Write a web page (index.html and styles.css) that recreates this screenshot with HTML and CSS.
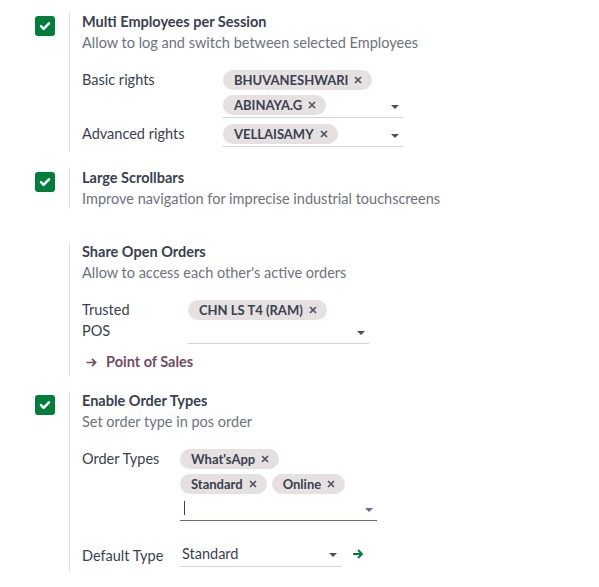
FILE: index.html
```html
<!DOCTYPE html>
<html lang="en">
  <head>
    <meta charset="UTF-8" />
    <title>POS Settings</title>
    <link rel="stylesheet" href="styles.css">
  </head>
  <body>
    <div class="settings">

      <div class="setting first">
        <div class="left"><span class="check"><svg viewBox="0 0 12 12" width="12" height="12"><path d="M2 6.2l2.6 2.6L10 3.4" fill="none" stroke="#fff" stroke-width="2.5" stroke-linecap="round" stroke-linejoin="round"/></svg></span></div>
        <div class="right">
          <div class="title">Multi Employees per Session</div>
          <div class="desc">Allow to log and switch between selected Employees</div>
          <div class="fields">
            <div class="row">
              <div class="label w1">Basic rights</div>
              <div class="field w-180">
                <div class="tags">
                  <span class="tag">BHUVANESHWARI <svg viewBox="0 0 8 8"><path d="M1 1l6 6M7 1L1 7"/></svg></span>
                  <span class="tag">ABINAYA.G <svg viewBox="0 0 8 8"><path d="M1 1l6 6M7 1L1 7"/></svg></span>
                </div>
                <span class="caret"></span>
              </div>
            </div>
            <div class="row">
              <div class="label w1">Advanced rights</div>
              <div class="field w-180">
                <div class="tags">
                  <span class="tag">VELLAISAMY <svg viewBox="0 0 8 8"><path d="M1 1l6 6M7 1L1 7"/></svg></span>
                </div>
                <span class="caret"></span>
              </div>
            </div>
          </div>
        </div>
      </div>

      <div class="setting second">
        <div class="left"><span class="check"><svg viewBox="0 0 12 12" width="12" height="12"><path d="M2 6.2l2.6 2.6L10 3.4" fill="none" stroke="#fff" stroke-width="2.5" stroke-linecap="round" stroke-linejoin="round"/></svg></span></div>
        <div class="right">
          <div class="title">Large Scrollbars</div>
          <div class="desc">Improve navigation for imprecise industrial touchscreens</div>
        </div>
      </div>

      <div class="setting third">
        <div class="left"></div>
        <div class="right">
          <div class="title">Share Open Orders</div>
          <div class="desc">Allow to access each other's active orders</div>
          <div class="fields">
            <div class="row">
              <div class="label w2">Trusted<br>POS</div>
              <div class="field w-181 tall">
                <div class="tags">
                  <span class="tag">CHN LS T4 (RAM) <svg viewBox="0 0 8 8"><path d="M1 1l6 6M7 1L1 7"/></svg></span>
                </div>
                <span class="caret"></span>
              </div>
            </div>
          </div>
          <a class="link" href="#"><svg viewBox="0 0 12 12" width="11" height="11"><path d="M0.5 6h10M6.5 2L10.5 6l-4 4" fill="none" stroke="#714b67" stroke-width="1.8"/></svg>Point of Sales</a>
        </div>
      </div>

      <div class="setting fourth">
        <div class="left"><span class="check"><svg viewBox="0 0 12 12" width="12" height="12"><path d="M2 6.2l2.6 2.6L10 3.4" fill="none" stroke="#fff" stroke-width="2.5" stroke-linecap="round" stroke-linejoin="round"/></svg></span></div>
        <div class="right">
          <div class="title">Enable Order Types</div>
          <div class="desc">Set order type in pos order</div>
          <div class="fields">
            <div class="row">
              <div class="label w3">Order Types</div>
              <div class="field w-197 focus">
                <div class="tags">
                  <span class="tag">What'sApp <svg viewBox="0 0 8 8"><path d="M1 1l6 6M7 1L1 7"/></svg></span>
                  <span class="break"></span>
                  <span class="tag">Standard <svg viewBox="0 0 8 8"><path d="M1 1l6 6M7 1L1 7"/></svg></span>
                  <span class="tag">Online <svg viewBox="0 0 8 8"><path d="M1 1l6 6M7 1L1 7"/></svg></span>
                  <span class="input"><span class="cursor"></span></span>
                </div>
                <span class="caret"></span>
              </div>
            </div>
            <div class="row default">
              <div class="label w3">Default Type</div>
              <div class="field w-161 select">
                <span class="value">Standard</span>
                <span class="caret"></span>
              </div>
              <svg class="go" viewBox="0 0 12 12" width="12" height="12"><path d="M1 6h9M6 2l4 4-4 4" fill="none" stroke="#017e3c" stroke-width="2"/></svg>
            </div>
          </div>
        </div>
      </div>

    </div>
  </body>
</html>
```

FILE: styles.css
```css
* {
  margin: 0;
  padding: 0;
  box-sizing: border-box;
}
body {
  background: #fff;
  font-family: Lato, "Liberation Sans", sans-serif;
  font-size: 14.5px;
  color: #374151;
}
.settings {
  padding-top: 12px;
}
.setting {
  display: flex;
}
.setting .left {
  width: 69px;
  padding-left: 35px;
  padding-top: 4px;
}
.check {
  display: flex;
  align-items: center;
  justify-content: center;
  width: 20px;
  height: 20px;
  background: #017e3c;
  border-radius: 3px;
}
.setting .right {
  border-left: 1px solid #dee2e6;
  padding-left: 12px;
  flex: 1;
}
.first .right { padding-bottom: 1px; }
.second { margin-top: 16px; }
.third { margin-top: 33px; }
.fourth { margin-top: 15px; }

.title {
  line-height: 20px;
  font-weight: 700;
  color: #374151;
}
.desc {
  line-height: 21px;
  color: #6b7280;
}
.fields {
  margin-top: 15px;
}
.row {
  display: flex;
  margin-bottom: 4px;
}
.label {
  padding-top: 1px;
  line-height: 21px;
  color: #374151;
}
.w1 { width: 141px; }
.w2 { width: 106px; }
.w3 { width: 98px; }
.field {
  position: relative;
  border-bottom: 1px solid #ced4da;
  padding-bottom: 2px;
}
.w-180 { width: 180px; }
.w-181 { width: 181px; }
.w-197 { width: 197px; }
.w-161 { width: 161px; }
.tall { min-height: 46px; }
.tags {
  display: flex;
  flex-wrap: wrap;
  gap: 0 5px;
  margin-top: -3px;
}
.tag {
  display: inline-flex;
  align-items: center;
  height: 20px;
  margin-top: 5px;
  padding: 0 10px 0 11px;
  border-radius: 10px;
  background: #e7e0e0;
  font-size: 13px;
  font-weight: 700;
  color: #374151;
  white-space: nowrap;
}
.tag svg {
  width: 8px;
  height: 8px;
  margin-left: 6px;
  fill: none;
  stroke: #4b5563;
  stroke-width: 1.7;
}
.break {
  flex-basis: 100%;
  height: 0;
}
.input {
  flex-basis: 100%;
  height: 20px;
  margin-top: 4px;
}
.cursor {
  display: block;
  width: 1px;
  height: 14px;
  background: #374151;
  margin: 3px 0 0 4px;
}
.caret {
  position: absolute;
  right: 4px;
  bottom: 8px;
  width: 0;
  height: 0;
  border-left: 4px solid transparent;
  border-right: 4px solid transparent;
  border-top: 4px solid #495057;
}
.focus {
  border-bottom-color: #71639e;
}
.focus .caret {
  border-top-color: #71639e;
}
.link {
  display: flex;
  align-items: center;
  gap: 9px;
  margin-top: 8px;
  padding-left: 4px;
  padding-bottom: 4px;
  line-height: 20px;
  font-weight: 700;
  color: #714b67;
  text-decoration: none;
}
.default {
  margin-top: 22px;
  align-items: center;
}
.select {
  height: 24px;
  padding-left: 2px;
  line-height: 21px;
  color: #374151;
}
.select .caret {
  bottom: 9px;
}
.go {
  margin-left: 11px;
  margin-top: -2px;
}
.fourth .right { padding-bottom: 2px; }
```
